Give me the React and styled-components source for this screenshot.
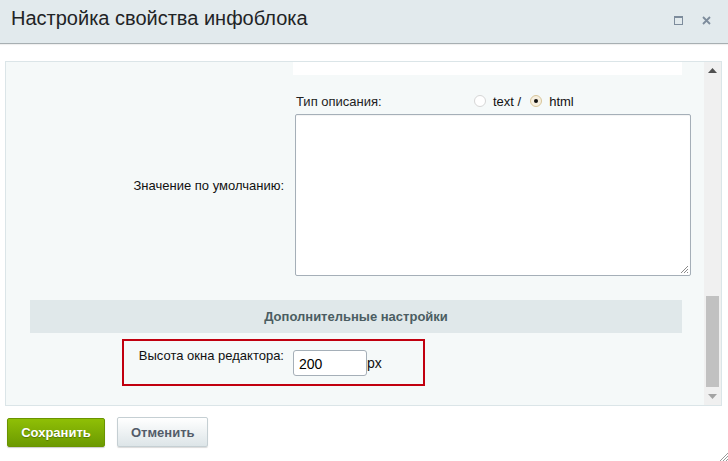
import React from "react";
import styled, { createGlobalStyle } from "styled-components";

const GlobalStyle = createGlobalStyle`
  html, body {
    margin: 0;
    padding: 0;
    background: #fff;
  }
  body {
    font-family: "Liberation Sans", Arial, sans-serif;
    font-size: 13px;
    color: #000;
  }
`;

const Dialog = styled.div`
  position: relative;
  width: 728px;
  height: 461px;
  background: #fff;
  display: flex;
  flex-direction: column;
  overflow: hidden;
`;

const Header = styled.div`
  height: 44px;
  flex: none;
  background: #e2eaed;
  border-bottom: 1px solid #a7afb2;
  box-shadow: 0 1px 1px rgba(0, 0, 0, 0.06);
  display: flex;
  align-items: center;
  padding: 0 17px 0 11px;
  box-sizing: border-box;
`;

const Title = styled.div`
  flex: 1;
  font-size: 20px;
  color: #1f2426;
  margin-top: -7px;
`;

const HeaderIcons = styled.div`
  display: flex;
  gap: 19px;
  align-items: center;
  margin-top: -2px;
`;

const Body = styled.div`
  padding: 17px 6px 0 5px;
`;

const Panel = styled.div`
  height: 345px;
  box-sizing: border-box;
  border: 1px solid #dbe5e8;
  background: #f5f9f9;
  display: flex;
  overflow: hidden;
`;

const Content = styled.div`
  flex: 1;
  padding: 0 22px 0 24px;
`;

const Grid = styled.div`
  display: grid;
  grid-template-columns: 263px 389px;
`;

const Label = styled.div`
  text-align: right;
  padding-right: 9px;
  padding-top: 20px;
  align-self: center;
  white-space: nowrap;
  color: #111;
`;

const WhiteTail = styled.div`
  height: 13px;
  background: #fff;
`;

const DescHead = styled.div`
  display: flex;
  align-items: center;
  height: 18px;
  margin-top: 17px;
  margin-left: 3px;
  margin-bottom: 4px;
`;

const DescLabel = styled.span`
  width: 178px;
  color: #222;
`;

const Radio = styled.span`
  display: inline-block;
  box-sizing: border-box;
  width: 12px;
  height: 12px;
  border-radius: 50%;
  border: 1px solid ${(p) => (p.$checked ? "#d8c59a" : "#d6d6d6")};
  background: ${(p) => (p.$checked ? "#f6efdf" : "#fff")};
  position: relative;
  margin-right: 7px;
  &::after {
    content: "";
    display: ${(p) => (p.$checked ? "block" : "none")};
    position: absolute;
    left: 3px;
    top: 3px;
    width: 4px;
    height: 4px;
    border-radius: 50%;
    background: #111;
  }
`;

const RadioText = styled.span`
  margin-right: 9px;
  color: #111;
`;

const TextArea = styled.div`
  position: relative;
  width: 396px;
  height: 162px;
  box-sizing: border-box;
  background: #fff;
  border: 1px solid #a5afb8;
  border-radius: 2px;
  margin-left: 2px;
  box-shadow: inset 0 1px 1px rgba(0, 0, 0, 0.05);
`;

const Grip = styled.svg`
  position: absolute;
  right: 1px;
  bottom: 1px;
`;

const SectionHead = styled.div`
  margin-top: 24px;
  height: 33px;
  background: #e0e8ea;
  display: flex;
  align-items: center;
  justify-content: center;
  font-weight: bold;
  color: #4b5d62;
`;

const Highlight = styled.div`
  display: flex;
  align-items: flex-start;
  width: 303px;
  box-sizing: border-box;
  margin: 6px 0 0 92px;
  border: 2px solid #c1000f;
  padding: 7px 0 8px 16px;
`;

const FieldLabel = styled.div`
  width: 144px;
  display: flex;
  justify-content: flex-end;
  white-space: nowrap;
  color: #111;
  line-height: 15px;
`;

const Input = styled.div`
  width: 74px;
  height: 26px;
  box-sizing: border-box;
  margin: 2px 0 0 9px;
  border: 1px solid #a5afb8;
  border-radius: 3px;
  background: #fff;
  font-size: 14px;
  padding: 5px 0 0 5px;
  color: #000;
`;

const Unit = styled.span`
  margin-top: 7px;
  font-size: 14px;
  color: #111;
`;

const Scrollbar = styled.div`
  width: 17px;
  flex: none;
  background: #f0f0f0;
  display: flex;
  flex-direction: column;
  align-items: center;
`;

const Arrow = styled.div`
  height: 17px;
  display: flex;
  align-items: center;
  justify-content: center;
`;

const Track = styled.div`
  flex: 1;
  display: flex;
  flex-direction: column;
  justify-content: flex-end;
  padding-bottom: 1px;
`;

const Thumb = styled.div`
  width: 13px;
  height: 91px;
  background: #c1c1c1;
`;

const Footer = styled.div`
  display: flex;
  gap: 12px;
  padding: 11px 0 0 7px;
  align-items: flex-start;
`;

const Button = styled.button`
  font-family: "Liberation Sans", Arial, sans-serif;
  font-weight: bold;
  font-size: 13px;
  height: 30px;
  border-radius: 2px;
  cursor: pointer;
  padding: 0 13px;
  ${(p) =>
    p.$primary
      ? `
    margin-top: 1px;
    height: 29px;
    background: linear-gradient(#8fbf06, #6c9a01);
    border: 1px solid #6a9400;
    color: #fff;
    text-shadow: 0 1px 1px rgba(0,0,0,0.3);
    box-shadow: 0 1px 1px rgba(0,0,0,0.2);
    width: 98px;
  `
      : `
    background: linear-gradient(#ffffff, #dde5e8);
    border: 1px solid #c5cfd3;
    color: #535c69;
    box-shadow: 0 1px 1px rgba(0,0,0,0.15);
    width: 91px;
  `}
`;

const CornerGrip = styled.svg`
  position: absolute;
  right: 0;
  bottom: 0;
`;

export default function App() {
  return (
    <>
      <GlobalStyle />
      <Dialog>
        <Header>
          <Title>Настройка свойства инфоблока</Title>
          <HeaderIcons>
            <svg width="9" height="9" viewBox="0 0 9 9">
              <rect x="0.5" y="0.5" width="8" height="8" fill="none" stroke="#7d8c9c" />
              <rect x="0" y="0" width="9" height="2" fill="#7d8c9c" />
            </svg>
            <svg width="9" height="9" viewBox="0 0 9 9">
              <path d="M1 1 L8 8 M8 1 L1 8" stroke="#7d8c9c" strokeWidth="1.8" />
            </svg>
          </HeaderIcons>
        </Header>
        <Body>
          <Panel>
            <Content>
              <Grid>
                <div />
                <WhiteTail />
                <Label>Значение по умолчанию:</Label>
                <div>
                  <DescHead>
                    <DescLabel>Тип описания:</DescLabel>
                    <Radio />
                    <RadioText>text /</RadioText>
                    <Radio $checked />
                    <RadioText>html</RadioText>
                  </DescHead>
                  <TextArea>
                    <Grip width="9" height="9" viewBox="0 0 9 9">
                      <path d="M1 8 L8 1 M4 8 L8 4 M7 8 L8 7" stroke="#8a8a8a" strokeWidth="1" />
                    </Grip>
                  </TextArea>
                </div>
              </Grid>
              <SectionHead>Дополнительные настройки</SectionHead>
              <Highlight>
                <FieldLabel>Высота окна редактора:</FieldLabel>
                <Input>200</Input>
                <Unit>px</Unit>
              </Highlight>
            </Content>
            <Scrollbar>
              <Arrow>
                <svg width="9" height="5" viewBox="0 0 9 5">
                  <path d="M0 5 L4.5 0 L9 5 Z" fill="#505050" />
                </svg>
              </Arrow>
              <Track>
                <Thumb />
              </Track>
              <Arrow>
                <svg width="9" height="5" viewBox="0 0 9 5">
                  <path d="M0 0 L4.5 5 L9 0 Z" fill="#a3a3a3" />
                </svg>
              </Arrow>
            </Scrollbar>
          </Panel>
        </Body>
        <Footer>
          <Button $primary>Сохранить</Button>
          <Button>Отменить</Button>
        </Footer>
        <CornerGrip width="9" height="9" viewBox="0 0 9 9">
          <path d="M1 9 L9 1 M4 9 L9 4 M7 9 L9 7" stroke="#9a9a9a" strokeWidth="1" />
        </CornerGrip>
      </Dialog>
    </>
  );
}
